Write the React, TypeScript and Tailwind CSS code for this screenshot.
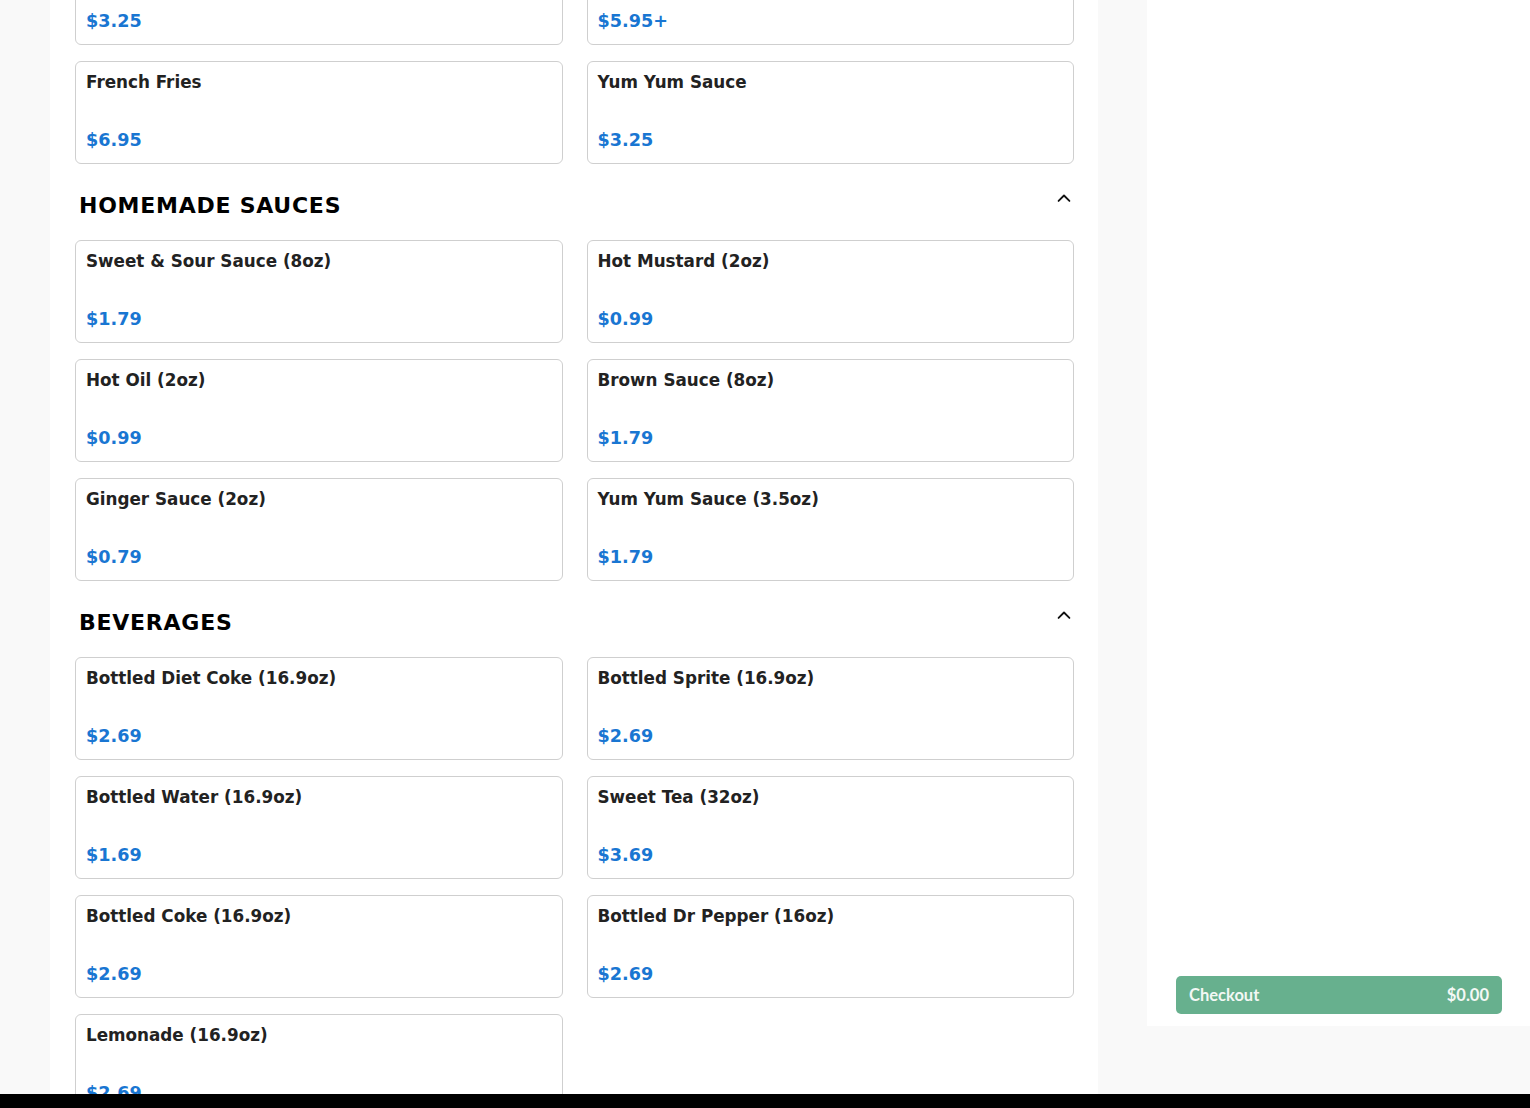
import React from 'react';

type Item = { name: string; price: string };
type Section = { title: string; items: Item[]; showHeader?: boolean };

const SECTIONS: Section[] = [
  {
    title: 'SIDES',
    showHeader: false,
    items: [
      { name: 'Egg Roll (2pc)', price: '$3.25' },
      { name: 'Fried Rice', price: '$5.95+' },
      { name: 'French Fries', price: '$6.95' },
      { name: 'Yum Yum Sauce', price: '$3.25' },
    ],
  },
  {
    title: 'HOMEMADE SAUCES',
    items: [
      { name: 'Sweet & Sour Sauce (8oz)', price: '$1.79' },
      { name: 'Hot Mustard (2oz)', price: '$0.99' },
      { name: 'Hot Oil (2oz)', price: '$0.99' },
      { name: 'Brown Sauce (8oz)', price: '$1.79' },
      { name: 'Ginger Sauce (2oz)', price: '$0.79' },
      { name: 'Yum Yum Sauce (3.5oz)', price: '$1.79' },
    ],
  },
  {
    title: 'BEVERAGES',
    items: [
      { name: 'Bottled Diet Coke (16.9oz)', price: '$2.69' },
      { name: 'Bottled Sprite (16.9oz)', price: '$2.69' },
      { name: 'Bottled Water (16.9oz)', price: '$1.69' },
      { name: 'Sweet Tea (32oz)', price: '$3.69' },
      { name: 'Bottled Coke (16.9oz)', price: '$2.69' },
      { name: 'Bottled Dr Pepper (16oz)', price: '$2.69' },
      { name: 'Lemonade (16.9oz)', price: '$2.69' },
    ],
  },
];

function ChevronUp() {
  return (
    <svg width="20" height="20" viewBox="0 0 24 24" fill="none" stroke="#111" strokeWidth="2.2" strokeLinecap="round" strokeLinejoin="round">
      <path d="M5.5 15.5l6.5-6.5 6.5 6.5" />
    </svg>
  );
}

function MenuCard({ item }: { item: Item }) {
  return (
    <div className="h-[103px] rounded-[6px] border border-[#cfcfcf] bg-white px-[10px] pt-[8px] flex flex-col">
      <div className="text-[16.8px] font-bold leading-[24px] text-[#222]">{item.name}</div>
      <div className="mt-auto mb-[11px] text-[17.6px] font-bold leading-[24px] text-[#1976d2]">{item.price}</div>
    </div>
  );
}

export default function App() {
  return (
    <div
      className="relative h-[1108px] w-[1530px] overflow-hidden bg-[#f9f9f9]"
      style={{ fontFamily: '"DejaVu Sans", sans-serif' }}
    >
      <div className="flex h-[1094px]">
        <div className="w-[50px] shrink-0" />
        <main className="w-[1048px] shrink-0 bg-white pl-[25px] pr-[24px] overflow-hidden">
          <div className="-mt-[58px]">
            {SECTIONS.map((section) => (
              <section key={section.title}>
                {section.showHeader !== false && (
                  <div className="flex h-[76px] items-center justify-between pl-[4px] pr-[0px] pt-[6px]">
                    <h2 className="text-[22px] font-bold tracking-[0.75px] text-black">{section.title}</h2>
                    <div className="-mt-[14px]">
                      <ChevronUp />
                    </div>
                  </div>
                )}
                <div className="grid grid-cols-2 gap-x-[24px] gap-y-[16px]">
                  {section.items.map((item) => (
                    <MenuCard key={item.name} item={item} />
                  ))}
                </div>
              </section>
            ))}
          </div>
        </main>
        <div className="w-[49px] shrink-0" />
        <aside className="flex h-[1026px] flex-1 flex-col justify-end bg-white px-[29px] pb-[12px]">
          <button
            className="flex h-[38px] w-[326px] items-center justify-between rounded-[5px] bg-[#67b08e] pl-[13px] pr-[13px] text-[16.5px] font-bold text-[#f3f8f5]"
            style={{ fontFamily: 'Lato, "Open Sans", sans-serif' }}
          >
            <span>Checkout</span>
            <span>$0.00</span>
          </button>
        </aside>
      </div>
      <div className="h-[14px] bg-black" />
    </div>
  );
}
